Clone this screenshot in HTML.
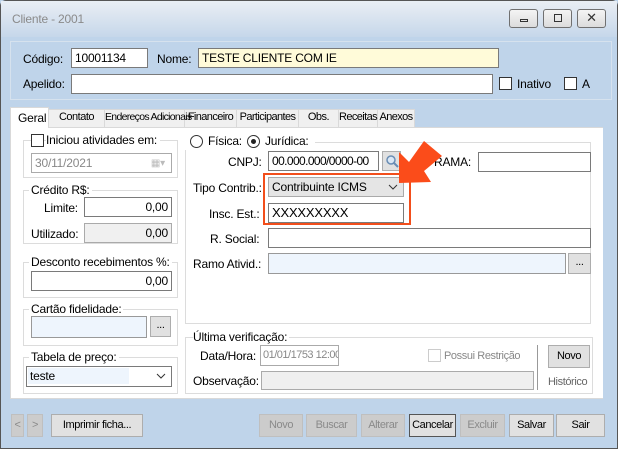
<html><head><style>
*{box-sizing:border-box}
body{margin:0;width:618px;height:449px;overflow:hidden;font-family:"Liberation Sans",sans-serif;font-size:12px;letter-spacing:-0.2px;color:#000;position:relative;background:#bfd4ea}
.a{position:absolute}
.t{position:absolute;white-space:nowrap;line-height:14px}
.in{position:absolute;background:#fff;border:1px solid #7a7a7a;padding:2px 3px;line-height:14px;white-space:nowrap}
.btn{position:absolute;background:#e1e1e1;border:1px solid #adadad;text-align:center;font-size:11px;line-height:21px;letter-spacing:-0.4px}
.dis{color:#8a8a8a;background:#cccccc;border-color:#bfbfbf}
.grp{position:absolute;border:1px solid #dcdcdc}
.cb{position:absolute;width:13px;height:13px;border:1px solid #333;background:#fff}
.tab{position:absolute;top:109px;height:18px;text-align:center;font-size:11px;letter-spacing:-0.5px;line-height:17px;border-right:1px solid #d9d9d9;white-space:nowrap}
.chev{position:absolute;right:5px;top:6px}
</style></head><body>
<div class="a" style="left:0;top:0;width:618px;height:449px;border:1px solid #555;border-radius:6px 6px 0 0"></div>
<div class="a" style="left:1px;top:1px;width:616px;height:36px;background:linear-gradient(#e9eef4,#c6d7ea)"></div>
<div class="t" style="left:12px;top:12px;color:#8a8a8a;font-size:12px">Cliente - 2001</div>
<div class="a" style="left:509px;top:9px;width:29px;height:19px;border:1px solid #707070;border-radius:3px;background:linear-gradient(#f4f4f4,#dcdcdc)"><div class="a" style="left:10px;top:9px;width:8px;height:3px;border:1px solid #333"></div></div>
<div class="a" style="left:543px;top:9px;width:29px;height:19px;border:1px solid #707070;border-radius:3px;background:linear-gradient(#f4f4f4,#dcdcdc)"><div class="a" style="left:10px;top:4px;width:8px;height:8px;border:1px solid #333"></div></div>
<div class="a" style="left:577px;top:9px;width:29px;height:19px;border:1px solid #707070;border-radius:3px;background:linear-gradient(#f4f4f4,#dcdcdc);text-align:center;line-height:16px;font-size:13px;color:#333">✕</div>
<div class="a" style="left:10px;top:41px;width:602px;height:59px;border:1px solid #d6e2ee"></div>
<div class="t" style="left:23px;top:52px">Código:</div>
<div class="in" style="left:71px;top:48px;width:77px;height:20px">10001134</div>
<div class="t" style="left:157px;top:52px">Nome:</div>
<div class="in" style="left:198px;top:48px;width:301px;height:20px;background:#fffbd9">TESTE CLIENTE COM IE</div>
<div class="t" style="left:23px;top:77px">Apelido:</div>
<div class="in" style="left:71px;top:74px;width:422px;height:20px"></div>
<div class="cb" style="left:499px;top:77px"></div><div class="t" style="left:517px;top:77px">Inativo</div>
<div class="cb" style="left:564px;top:77px"></div><div class="t" style="left:582px;top:77px">A</div>
<!-- tabs -->
<div class="a" style="left:10px;top:127px;width:597px;height:272px;background:#fff;border:1px solid #d9d9d9"></div>
<div class="a" style="left:49px;top:109px;width:366px;height:18px;background:#f0f0f0;border-top:1px solid #d9d9d9"></div>
<div class="a" style="left:10px;top:107px;width:39px;height:21px;background:#fff;border:1px solid #d9d9d9;border-bottom:none"></div>
<div class="t" style="left:18px;top:111px">Geral</div>
<div class="tab" style="left:49px;width:56px">Contato</div>
<div class="tab" style="left:105px;width:80px;font-size:10.5px;letter-spacing:-0.7px">Endereços Adicionais</div>
<div class="tab" style="left:185px;width:52px;letter-spacing:-0.6px">Financeiro</div>
<div class="tab" style="left:237px;width:62px;letter-spacing:-0.6px">Participantes</div>
<div class="tab" style="left:299px;width:40px">Obs.</div>
<div class="tab" style="left:339px;width:39px;letter-spacing:-0.6px">Receitas</div>
<div class="tab" style="left:378px;width:37px;letter-spacing:-0.6px">Anexos</div>
<div class="a" style="left:603px;top:127px;width:4px;height:272px;background:#bfd4ea"></div>
<!-- left groups -->
<div class="grp" style="left:23px;top:140px;width:155px;height:38px"></div>
<div class="cb" style="left:31px;top:134px"></div><div class="t" style="left:46px;top:133px;background:#fff;padding-right:3px">Iniciou atividades em:</div>
<div class="in" style="left:31px;top:153px;width:141px;height:20px;color:#888;border-color:#aaa">30/11/2021<span style="position:absolute;right:6px;top:3px;color:#bbb;font-size:10px">▦▾</span></div>
<div class="grp" style="left:23px;top:190px;width:155px;height:54px"></div>
<div class="t" style="left:29px;top:183px;background:#fff;padding:0 2px">Crédito R$:</div>
<div class="t" style="left:44px;top:201px">Limite:</div>
<div class="in" style="left:84px;top:197px;width:88px;height:20px;text-align:right">0,00</div>
<div class="t" style="left:31px;top:227px">Utilizado:</div>
<div class="in" style="left:84px;top:223px;width:88px;height:20px;text-align:right;background:#f0f0f0;border-color:#aaa">0,00</div>
<div class="grp" style="left:23px;top:262px;width:155px;height:36px"></div>
<div class="t" style="left:29px;top:255px;background:#fff;padding:0 2px">Desconto recebimentos %:</div>
<div class="in" style="left:31px;top:271px;width:141px;height:20px;text-align:right">0,00</div>
<div class="grp" style="left:23px;top:309px;width:155px;height:37px"></div>
<div class="t" style="left:29px;top:302px;background:#fff;padding:0 2px">Cartão fidelidade:</div>
<div class="in" style="left:31px;top:316px;width:116px;height:22px;background:#eef5fd;border-color:#999"></div>
<div class="btn" style="left:150px;top:316px;width:21px;height:21px;line-height:16px">...</div>
<div class="grp" style="left:23px;top:357px;width:155px;height:37px"></div>
<div class="t" style="left:29px;top:350px;background:#fff;padding:0 2px">Tabela de preço:</div>
<div class="in" style="left:26px;top:366px;width:146px;height:21px;background:#fff"><div class="a" style="left:1px;top:1px;width:101px;height:16px;background:#eef5fd"></div><span style="position:relative">teste</span><svg class="chev" width="10" height="6"><polyline points="1,1 5,5 9,1" fill="none" stroke="#333"/></svg></div>
<!-- right group -->
<div class="grp" style="left:185px;top:142px;width:406px;height:182px"></div>
<div class="a" style="left:180px;top:134px;width:135px;height:16px;background:#fff"></div>
<div class="a" style="left:190px;top:135px;width:13px;height:13px;border:1px solid #333;border-radius:50%"></div>
<div class="t" style="left:208px;top:134px">Física:</div>
<div class="a" style="left:247px;top:135px;width:13px;height:13px;border:1px solid #333;border-radius:50%"><div class="a" style="left:3px;top:3px;width:5px;height:5px;background:#222;border-radius:50%"></div></div>
<div class="t" style="left:265px;top:134px">Jurídica:</div>
<div class="t" style="left:228px;top:155px">CNPJ:</div>
<div class="in" style="left:268px;top:151px;width:111px;height:20px;letter-spacing:-0.6px">00.000.000/0000-00</div>
<div class="btn" style="left:382px;top:151px;width:19px;height:20px"><svg class="a" style="left:2px;top:2px" width="14" height="14"><circle cx="6" cy="6" r="4" fill="#dbe8f5" stroke="#6a8db4" stroke-width="1.5"/><line x1="9" y1="9" x2="13" y2="13" stroke="#6a8db4" stroke-width="2"/></svg></div>
<div class="t" style="left:434px;top:155px">RAMA:</div>
<div class="in" style="left:478px;top:152px;width:113px;height:20px"></div>
<div class="t" style="left:193px;top:181px">Tipo Contrib.:</div>
<div class="in" style="left:268px;top:177px;width:136px;height:20px;background:#e5e5e5;border-color:#aaa">Contribuinte ICMS<svg class="chev" width="10" height="6"><polyline points="1,1 5,5 9,1" fill="none" stroke="#333"/></svg></div>
<div class="t" style="left:209px;top:207px">Insc. Est.:</div>
<div class="in" style="left:268px;top:203px;width:136px;height:20px;font-size:13px;line-height:13px">XXXXXXXXX</div>
<div class="a" style="left:263px;top:173px;width:148px;height:52px;border:2px solid #f24e1b"></div>
<svg class="a" style="left:0;top:0" width="618" height="449"><polygon points="399,183 399,152 409,162 424,141 442,156 424,171 431,182" fill="#fb4c1a"/></svg>
<div class="t" style="left:210px;top:232px">R. Social:</div>
<div class="in" style="left:268px;top:228px;width:323px;height:20px"></div>
<div class="t" style="left:193px;top:257px">Ramo Ativid.:</div>
<div class="in" style="left:268px;top:253px;width:298px;height:21px;background:#eef5fd;border-color:#999"></div>
<div class="btn" style="left:568px;top:253px;width:23px;height:21px;line-height:16px">...</div>
<div class="grp" style="left:185px;top:337px;width:408px;height:57px"></div>
<div class="t" style="left:193px;top:330px;background:#fff;padding-right:2px">Última verificação:</div>
<div class="t" style="left:200px;top:349px">Data/Hora:</div>
<div class="in" style="left:260px;top:345px;width:79px;height:21px;color:#888;border-color:#aaa;overflow:hidden;font-size:11px;letter-spacing:-0.5px;padding:2px 2px">01/01/1753 12:00:00</div>
<div class="cb" style="left:428px;top:349px;border-color:#ccc"></div>
<div class="t" style="left:444px;top:349px;color:#888;font-size:11px;letter-spacing:-0.4px">Possui Restrição</div>
<div class="a" style="left:537px;top:345px;width:1px;height:45px;background:#999"></div>
<div class="btn" style="left:548px;top:345px;width:42px;height:23px">Novo</div>
<div class="t" style="left:548px;top:375px;color:#666;font-size:11px;letter-spacing:-0.4px">Histórico</div>
<div class="t" style="left:193px;top:374px">Observação:</div>
<div class="in" style="left:261px;top:371px;width:273px;height:19px;background:#efefef;border-color:#aaa"></div>
<!-- bottom -->
<div class="a" style="left:1px;top:440px;width:616px;height:8px;background:#bfd4ea"></div>
<div class="btn dis" style="left:11px;top:414px;width:13px;height:23px">&lt;</div>
<div class="btn dis" style="left:27px;top:414px;width:16px;height:23px">&gt;</div>
<div class="btn" style="left:51px;top:414px;width:92px;height:23px">Imprimir ficha...</div>
<div class="btn dis" style="left:259px;top:414px;width:44px;height:23px">Novo</div>
<div class="btn dis" style="left:306px;top:414px;width:51px;height:23px">Buscar</div>
<div class="btn dis" style="left:361px;top:414px;width:44px;height:23px">Alterar</div>
<div class="btn" style="left:409px;top:414px;width:47px;height:23px;border-color:#555">Cancelar</div>
<div class="btn dis" style="left:460px;top:414px;width:45px;height:23px">Excluir</div>
<div class="btn" style="left:509px;top:414px;width:45px;height:23px">Salvar</div>
<div class="btn" style="left:556px;top:414px;width:49px;height:23px">Sair</div>
</body></html>
